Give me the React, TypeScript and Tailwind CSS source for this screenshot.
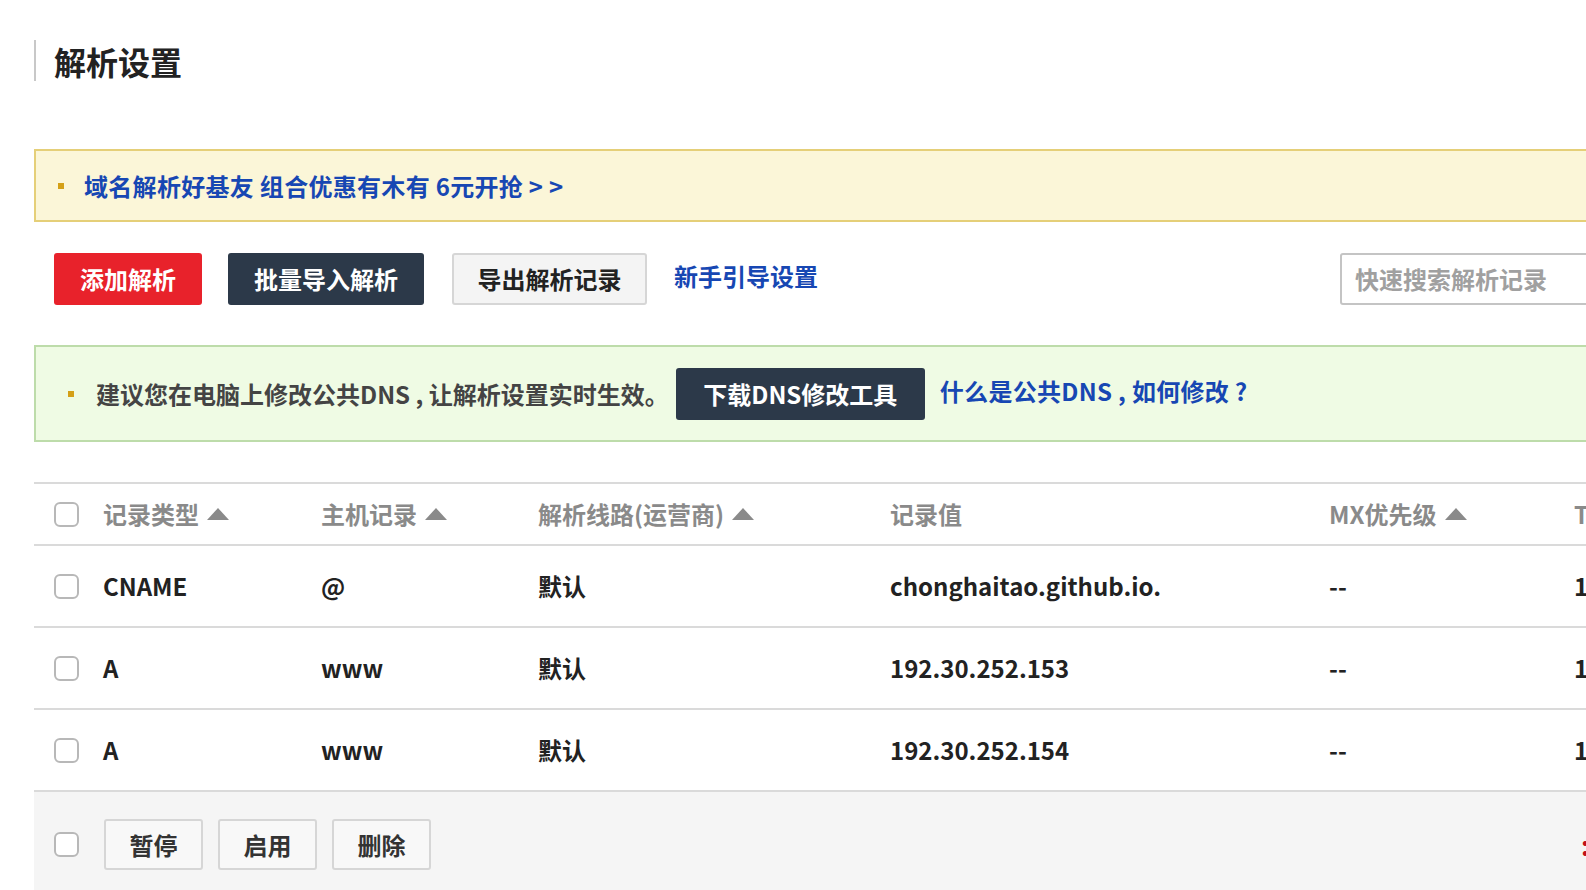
import React from 'react'

const font = { fontFamily: '"Noto Sans CJK SC", "Noto Sans", sans-serif' }

function Checkbox() {
  return <div className="w-[25px] h-[25px] shrink-0 rounded-[6px] border-2 border-[#b8b8b8] bg-white" />
}

function SortUp() {
  return (
    <svg width="22" height="12" viewBox="0 0 22 12" className="ml-2 shrink-0">
      <path d="M11 0 L22 12 L0 12 Z" fill="#8a8a8a" />
    </svg>
  )
}

const cols = 'grid grid-cols-[69px_218px_217px_352px_439px_245px_200px] items-center'

const rows = [
  { type: 'CNAME', host: '@', line: '默认', value: 'chonghaitao.github.io.', mx: '--', ttl: '1' },
  { type: 'A', host: 'www', line: '默认', value: '192.30.252.153', mx: '--', ttl: '1' },
  { type: 'A', host: 'www', line: '默认', value: '192.30.252.154', mx: '--', ttl: '1' },
]

export default function App() {
  return (
    <div className="w-[1586px] h-[890px] overflow-hidden bg-white" style={font}>
      <div className="w-[1720px] pl-[34px]">
        {/* Title */}
        <div className="mt-[40px] h-[41px] border-l-2 border-[#c8c8c8] pl-[18px] flex items-center">
          <h1 className="text-[32px] leading-none font-bold text-[#222]">解析设置</h1>
        </div>

        {/* Promo banner */}
        <div className="mt-[68px] h-[73px] border-2 border-[#e5cf78] bg-[#fbf6d8] flex items-center pl-[22px]">
          <span className="w-[6px] h-[6px] bg-[#d4a017] mr-[20px]" />
          <a className="text-[24px] font-bold text-[#1747b3] tracking-[0.3px]">域名解析好基友 组合优惠有木有 6元开抢 &gt; &gt;</a>
        </div>

        {/* Actions */}
        <div className="mt-[31px] h-[52px] flex items-center pl-[20px]">
          <button className="w-[148px] h-[52px] rounded-[3px] bg-[#e8222b] text-white text-[24px] font-bold">添加解析</button>
          <button className="ml-[26px] w-[196px] h-[52px] rounded-[3px] bg-[#2c3949] text-white text-[24px] font-bold">批量导入解析</button>
          <button className="ml-[28px] w-[195px] h-[52px] rounded-[3px] bg-[#f4f4f4] border-2 border-[#d6d6d6] text-[#222] text-[24px] font-bold">导出解析记录</button>
          <a className="ml-[27px] -mt-[6px] text-[24px] font-bold text-[#1747b3]">新手引导设置</a>
          <div className="ml-[522px] w-[300px] h-[52px] rounded-[3px] border-2 border-[#c4c4c4] flex items-center pl-[13px]">
            <span className="text-[24px] font-bold text-[#a0a0a0]">快速搜索解析记录</span>
          </div>
        </div>

        {/* DNS tip */}
        <div className="mt-[40px] h-[97px] border-2 border-[#bddcaa] bg-[#effbe4] flex items-center pl-[32px]">
          <span className="w-[6px] h-[6px] bg-[#d4a017] mr-[22px]" />
          <span className="text-[24px] font-bold text-[#444]">建议您在电脑上修改公共DNS , 让解析设置实时生效。</span>
          <button className="ml-[7px] w-[249px] h-[52px] rounded-[3px] bg-[#2c3949] text-white text-[24px] font-bold">下载DNS修改工具</button>
          <a className="ml-[15px] -mt-[6px] text-[24px] font-bold text-[#1747b3] tracking-[0.3px]">什么是公共DNS , 如何修改 ?</a>
        </div>

        {/* Table */}
        <div className="mt-[40px] border-t-2 border-[#dadada]">
          <div className={`${cols} h-[62px] border-b-2 border-[#dadada] text-[24px] font-bold text-[#8a8a8a]`}>
            <div className="pl-[20px]"><Checkbox /></div>
            <div className="flex items-center">记录类型<SortUp /></div>
            <div className="flex items-center">主机记录<SortUp /></div>
            <div className="flex items-center">解析线路(运营商)<SortUp /></div>
            <div>记录值</div>
            <div className="flex items-center">MX优先级<SortUp /></div>
            <div>TTL</div>
          </div>
          {rows.map((r, i) => (
            <div key={i} className={`${cols} h-[82px] border-b-2 border-[#dadada] text-[24px] font-bold text-[#222]`}>
              <div className="pl-[20px]"><Checkbox /></div>
              <div>{r.type}</div>
              <div>{r.host}</div>
              <div>{r.line}</div>
              <div>{r.value}</div>
              <div>{r.mx}</div>
              <div>{r.ttl}</div>
            </div>
          ))}
          {/* Bulk actions */}
          <div className="h-[110px] bg-[#f5f5f5] flex items-start pt-[27px] pl-[20px]">
            <div className="mt-[13px]"><Checkbox /></div>
            <button className="ml-[25px] w-[99px] h-[51px] rounded-[3px] border-2 border-[#d6d6d6] bg-[#f8f8f8] text-[24px] font-bold text-[#333]">暂停</button>
            <button className="ml-[15px] w-[99px] h-[51px] rounded-[3px] border-2 border-[#d6d6d6] bg-[#f8f8f8] text-[24px] font-bold text-[#333]">启用</button>
            <button className="ml-[15px] w-[99px] h-[51px] rounded-[3px] border-2 border-[#d6d6d6] bg-[#f8f8f8] text-[24px] font-bold text-[#333]">删除</button>
            <span className="ml-[1150px] mt-[6px] text-[26px] font-bold text-[#c0101a]">:</span>
          </div>
        </div>
      </div>
    </div>
  )
}
